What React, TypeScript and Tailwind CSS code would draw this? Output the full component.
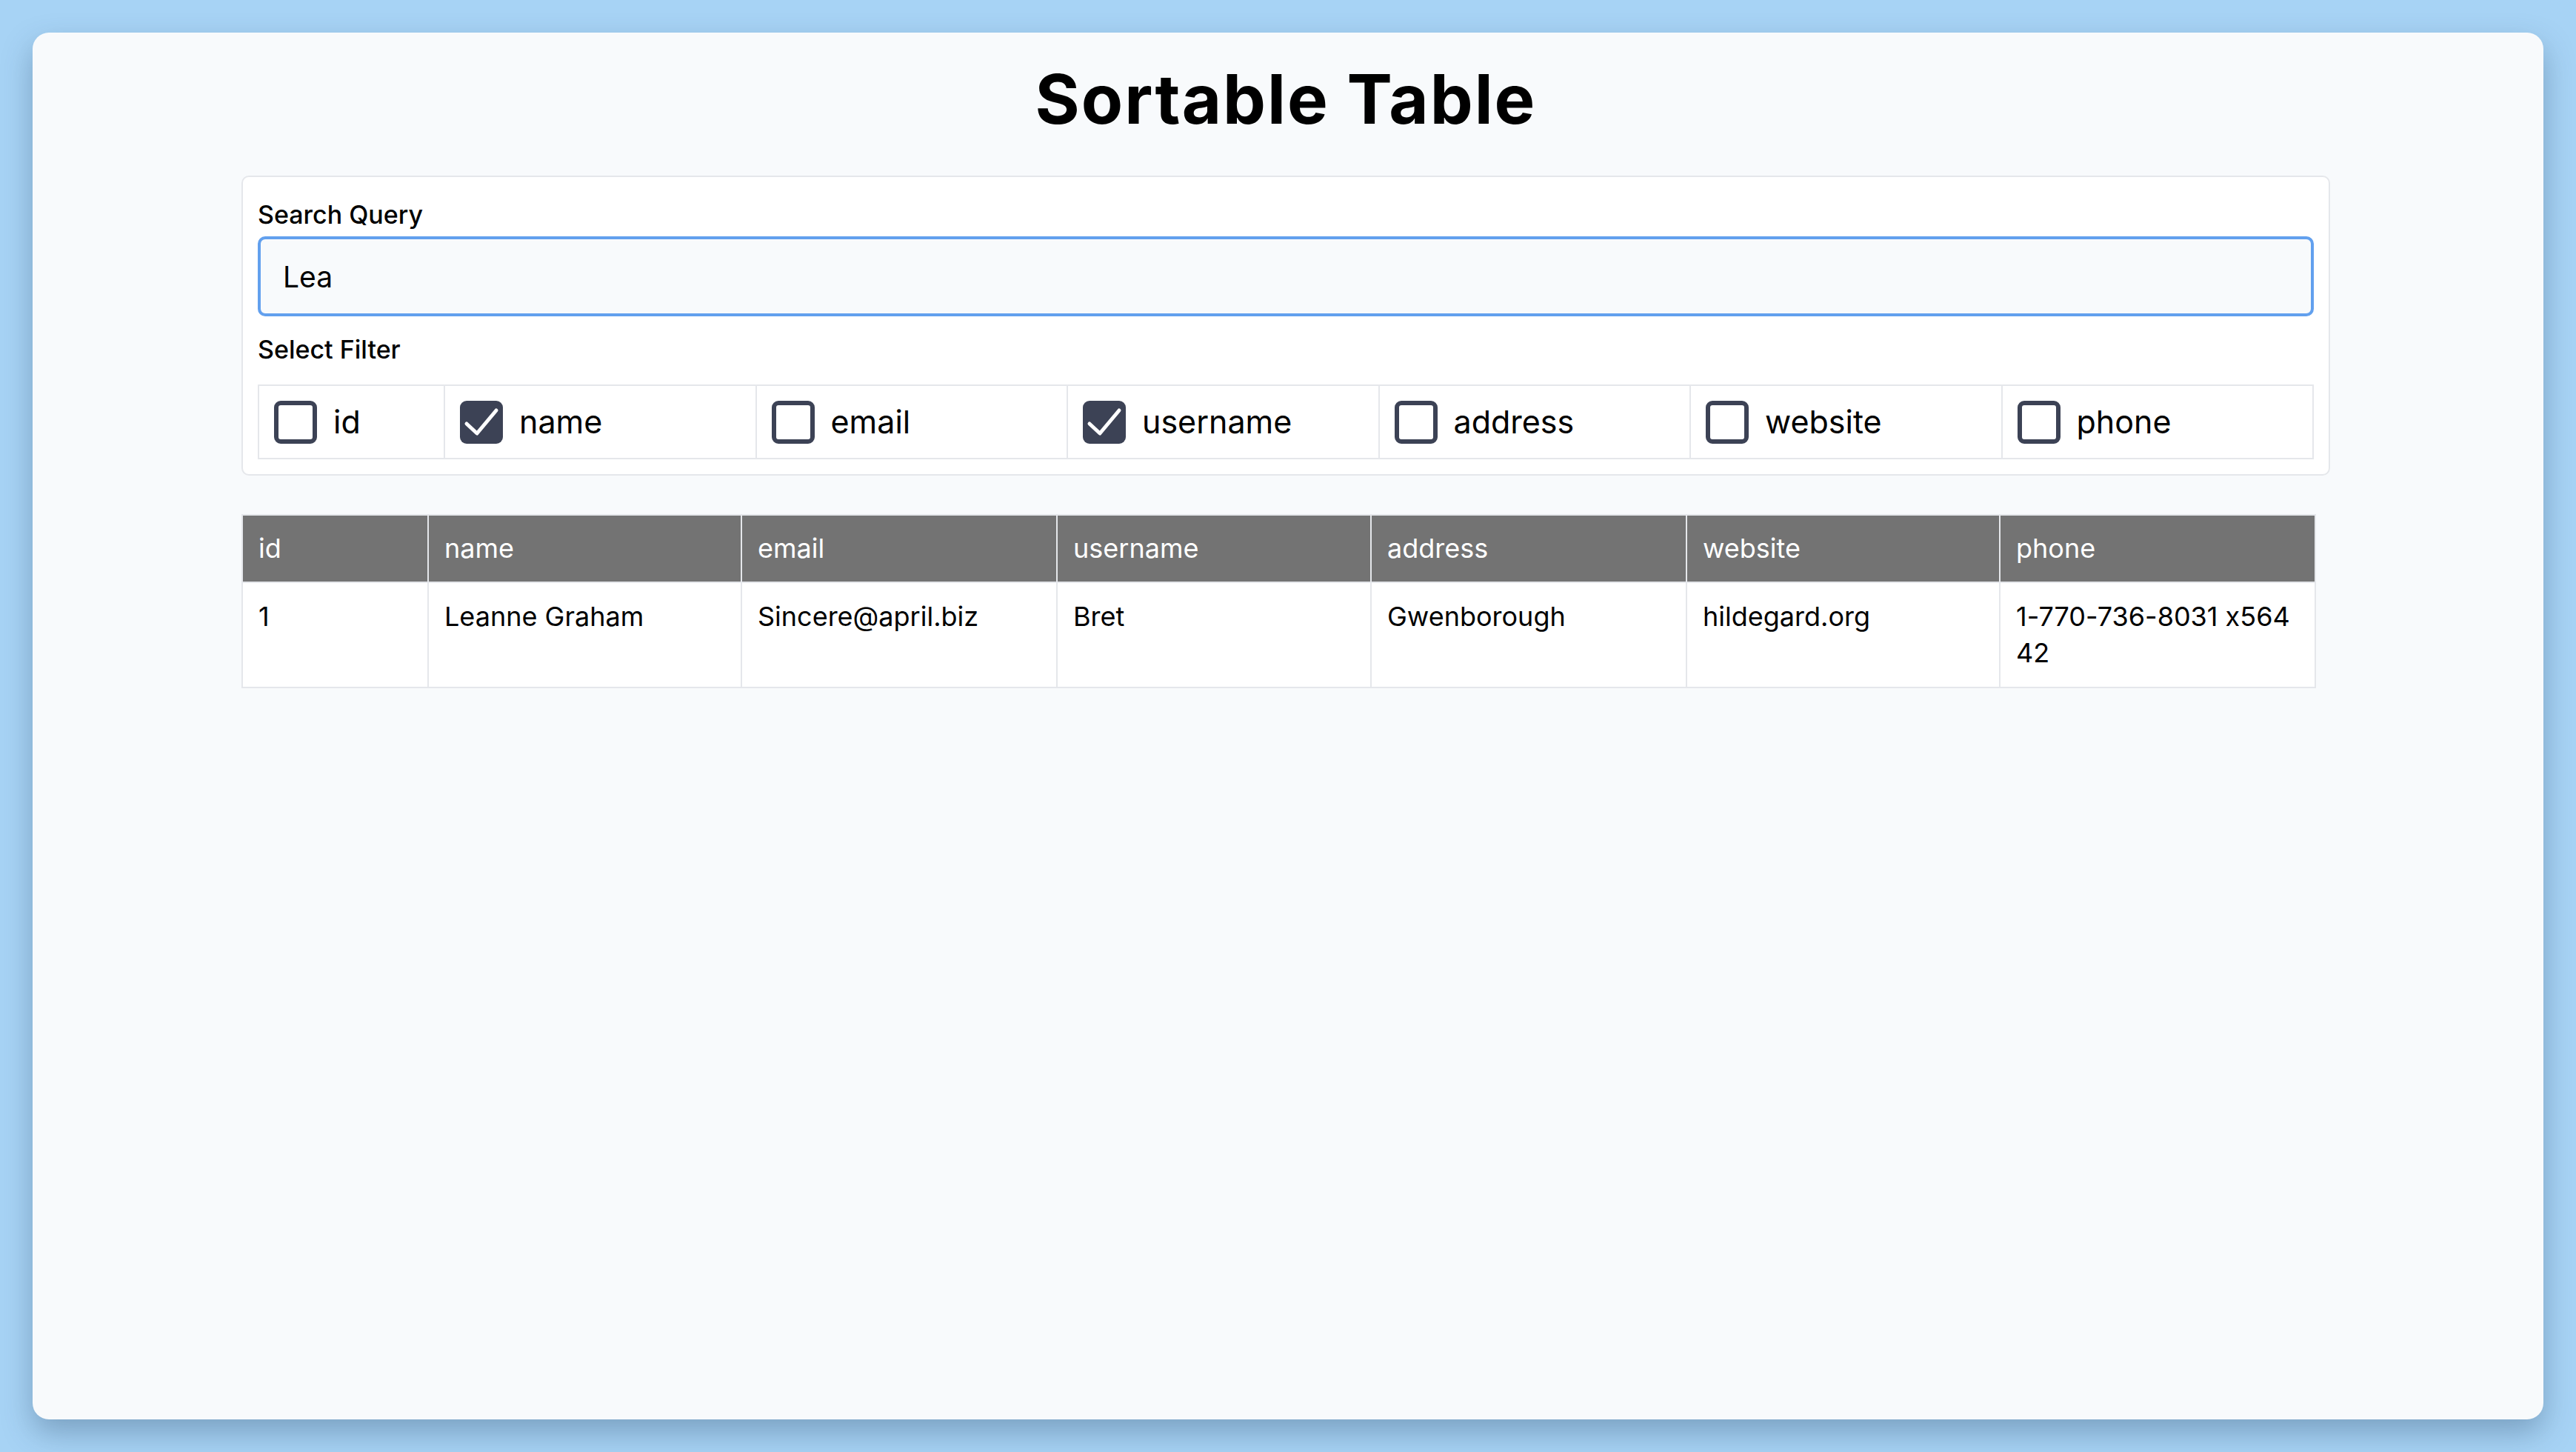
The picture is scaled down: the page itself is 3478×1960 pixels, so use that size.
import { useState } from "react";

const filtros = ["id", "name", "email", "username", "address", "website", "phone"];

const usuarios = [
  {
    id: "1",
    name: "Leanne Graham",
    email: "Sincere@april.biz",
    username: "Bret",
    address: "Gwenborough",
    website: "hildegard.org",
    phone: "1-770-736-8031 x56442",
  },
];

function Caixa({ marcado }: { marcado: boolean }) {
  return (
    <span
      className={
        marcado
          ? "flex h-[58px] w-[58px] shrink-0 items-center justify-center rounded-[9px] bg-[#3c4255]"
          : "flex h-[58px] w-[58px] shrink-0 rounded-[9px] border-[6px] border-[#3c4255] bg-white"
      }
    >
      {marcado && (
        <svg viewBox="0 0 58 58" className="h-[58px] w-[58px]">
          <path d="M9 31 L23 44 L49 13" fill="none" stroke="white" strokeWidth="5" strokeLinecap="round" strokeLinejoin="round" />
        </svg>
      )}
    </span>
  );
}

export default function App() {
  const [busca, setBusca] = useState("Lea");
  const [marcados, setMarcados] = useState<string[]>(["name", "username"]);

  const alternar = (f: string) => {
    setMarcados(marcados.includes(f) ? marcados.filter((m) => m !== f) : [...marcados, f]);
  };

  return (
    <div className="h-[1960px] w-full bg-[#a7d3f5] p-[44px] font-['Inter',sans-serif] text-black [font-feature-settings:'calt'_0]">
      <div className="h-full rounded-[22px] bg-[#f8fafc] pt-[44px] shadow-[0_18px_40px_rgba(40,70,100,0.35)]">
        <div className="ml-[282px] w-[2820px]">
          <h1 className="text-center text-[92px] font-bold leading-none tracking-[2px]">Sortable Table</h1>

          {/* busca + filtros */}
          <div className="mt-[57px] rounded-[10px] border-2 border-[#e5e7eb] bg-white px-[20px] pb-[20px] pt-[27px]">
            <label className="block text-[34px] font-medium leading-[48px]">Search Query</label>
            <input
              value={busca}
              onChange={(e) => setBusca(e.target.value)}
              className="mt-[5px] block h-[108px] w-full rounded-[10px] border-[4px] border-[#62a0ee] bg-[#f8fafc] px-[30px] text-[39px] outline-none"
            />
            <label className="mt-[21px] block text-[34px] font-medium leading-[48px]">Select Filter</label>
            <div className="mt-[23px] grid grid-cols-[249px_repeat(6,1fr)] border-2 border-[#e5e7eb]">
              {filtros.map((f, i) => (
                <button
                  key={f}
                  onClick={() => alternar(f)}
                  className={
                    "flex h-[97px] items-center gap-[22px] pl-[20px] text-left text-[43px] " +
                    (i > 0 ? "border-l-2 border-[#e5e7eb]" : "")
                  }
                >
                  <Caixa marcado={marcados.includes(f)} />
                  <span>{f}</span>
                </button>
              ))}
            </div>
          </div>

          {/* tabela */}
          <table className="mt-[52px] w-[2799px] table-fixed border-collapse text-[36px] leading-[49px]">
            <colgroup>
              <col className="w-[251px]" />
              <col className="w-[423px]" />
              <col className="w-[426px]" />
              <col className="w-[424px]" />
              <col className="w-[426px]" />
              <col className="w-[423px]" />
              <col className="w-[426px]" />
            </colgroup>
            <thead>
              <tr>
                {filtros.map((f) => (
                  <th key={f} className="border-2 border-[#e5e7eb] bg-[#737373] px-[21px] py-[20px] text-left font-normal text-white">
                    {f}
                  </th>
                ))}
              </tr>
            </thead>
            <tbody>
              {usuarios.map((u) => (
                <tr key={u.id} className="bg-white">
                  <td className="border-2 border-[#e5e7eb] px-[21px] py-[21px] align-top">{u.id}</td>
                  <td className="border-2 border-[#e5e7eb] px-[21px] py-[21px] align-top">{u.name}</td>
                  <td className="border-2 border-[#e5e7eb] px-[21px] py-[21px] align-top">{u.email}</td>
                  <td className="border-2 border-[#e5e7eb] px-[21px] py-[21px] align-top">{u.username}</td>
                  <td className="border-2 border-[#e5e7eb] px-[21px] py-[21px] align-top">{u.address}</td>
                  <td className="border-2 border-[#e5e7eb] px-[21px] py-[21px] align-top">{u.website}</td>
                  <td className="border-2 border-[#e5e7eb] px-[21px] py-[21px] align-top">
                    1-770-736-8031 x564
                    <br />
                    42
                  </td>
                </tr>
              ))}
            </tbody>
          </table>
        </div>
      </div>
    </div>
  );
}
